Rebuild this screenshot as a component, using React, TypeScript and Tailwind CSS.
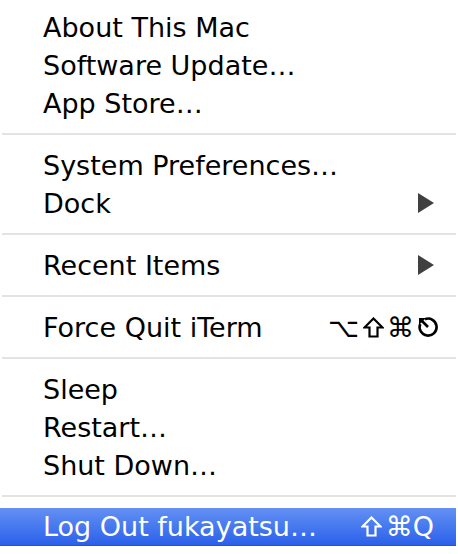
const font = { fontFamily: '"DejaVu Sans", "Liberation Sans", sans-serif' };

function Arrow() {
  return (
    <svg width="16" height="20" viewBox="0 0 16 20" className="shrink-0">
      <polygon points="0,0 16,10 0,20" fill="#404040" />
    </svg>
  );
}

function ShiftGlyph({ color }: { color: string }) {
  return (
    <svg width="21" height="21" viewBox="0 0 21 21" className="shrink-0">
      <polygon
        points="10.5,1.5 19.5,10.5 14.5,10.5 14.5,19.5 6.5,19.5 6.5,10.5 1.5,10.5"
        fill="none"
        stroke={color}
        strokeWidth="2.2"
        strokeLinejoin="miter"
      />
    </svg>
  );
}

function EscGlyph() {
  return (
    <svg width="22" height="22" viewBox="0 0 22 22" className="shrink-0">
      <path d="M8 3.2 A8.5 8.5 0 1 1 3.2 8" fill="none" stroke="#000" strokeWidth="2.6" />
      <path d="M3 3 L11 11" stroke="#000" strokeWidth="2.6" />
      <path d="M2 2 L9 2 L2 9 Z" fill="#000" />
    </svg>
  );
}

function Item({ label, right, active }: { label: string; right?: React.ReactNode; active?: boolean }) {
  return (
    <div
      className={
        "h-[38px] flex items-center justify-between pl-[43px] pr-[22px] mr-[2px] " +
        (active
          ? "bg-gradient-to-b from-[#6390f3] to-[#2b60ea] border-b border-[#1a55e6] text-white"
          : "text-black")
      }
    >
      <span className="text-[27px] leading-none whitespace-nowrap">{label}</span>
      {right}
    </div>
  );
}

function Sep() {
  return (
    <div className="h-[24px] flex items-center px-[2px]">
      <div className="h-[2px] w-full bg-[#e3e3e3]" />
    </div>
  );
}

export default function App() {
  return (
    <div className="w-[458px] h-[554px] bg-white pt-[8px] overflow-hidden" style={font}>
      <Item label="About This Mac" />
      <Item label="Software Update…" />
      <Item label="App Store…" />
      <Sep />
      <Item label="System Preferences…" />
      <Item label="Dock" right={<Arrow />} />
      <Sep />
      <Item label="Recent Items" right={<Arrow />} />
      <Sep />
      <Item
        label="Force Quit iTerm"
        right={
          <span className="flex items-center text-[27px] leading-none mr-[-5px]">
            <span>⌥</span>
            <span className="ml-[4px]">
              <ShiftGlyph color="#000" />
            </span>
            <span className="ml-[3px]">⌘</span>
            <span className="ml-[3px]">
              <EscGlyph />
            </span>
          </span>
        }
      />
      <Sep />
      <Item label="Sleep" />
      <Item label="Restart…" />
      <Item label="Shut Down…" />
      <Sep />
      <Item
        label="Log Out fukayatsu…"
        active
        right={
          <span className="flex items-center text-[27px] leading-none">
            <ShiftGlyph color="#fff" />
            <span className="ml-[4px]">⌘Q</span>
          </span>
        }
      />
    </div>
  );
}
